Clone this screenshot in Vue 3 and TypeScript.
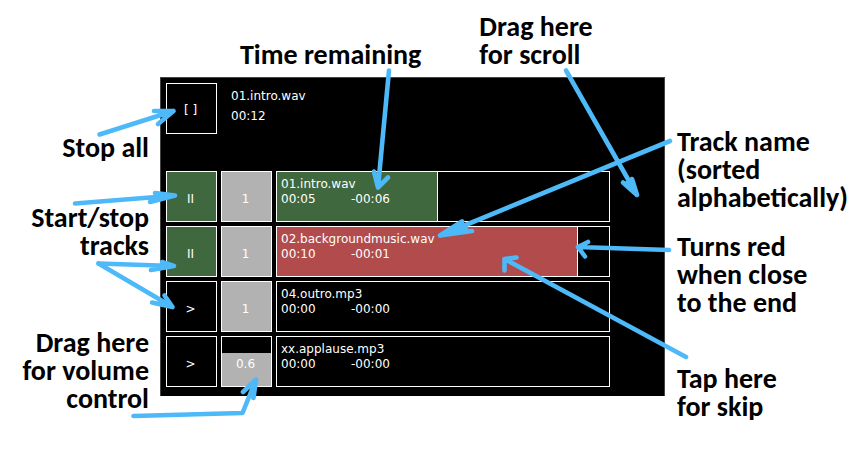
<script setup lang="ts">
import { ref } from 'vue'

interface Track {
  name: string
  elapsed: string
  remaining: string
  progress: number
  volume: number
  playing: boolean
  ending: boolean
}

const tracks = ref<Track[]>([
  { name: '01.intro.wav', elapsed: '00:05', remaining: '-00:06', progress: 48.5, volume: 1, playing: true, ending: false },
  { name: '02.backgroundmusic.wav', elapsed: '00:10', remaining: '-00:01', progress: 90.7, volume: 1, playing: true, ending: true },
  { name: '04.outro.mp3', elapsed: '00:00', remaining: '-00:00', progress: 0, volume: 1, playing: false, ending: false },
  { name: 'xx.applause.mp3', elapsed: '00:00', remaining: '-00:00', progress: 0, volume: 0.67, playing: false, ending: false },
])

const arrows: string[] = [
  'M99.5 134.5 L173.5 111 L154 111 M173.5 111 L158 124',
  'M75 203.5 L175 195.5 L155 193 M175 195.5 L150 202 M158 194 L168 196',
  'M98.5 263.5 L174 266 L162 262 M174 266 L151 270 M162 264 L172 266',
  'M98.5 263.5 L172.5 307 L164.5 295.5 M172.5 307 L152 302.5',
  'M133.5 416 L242.5 413 L256 379.5 L243 392 M256 379.5 L253.5 398',
  'M389 70.5 L378 187.5 L374 171.5 M378 187.5 L388 177.5',
  'M566 70.5 L637 195 L623 182.5 M637 195 L632 179 M627 183 L636 193',
  'M670 141 L440 235.5 L462 221.5 M440 235.5 L472 231 M446 234 L466 228',
  'M669 250 L578 247 L588 242 M578 247 L585 256.5',
  'M686 357 L504.5 259 L516.5 257.5 M504.5 259 L504.5 270.5',
]

const level = (v: number): string => (v >= 1 ? '1' : (Math.floor(v * 10) / 10).toString())

function stopAll(): void {
  tracks.value.forEach((t) => (t.playing = false))
}
</script>

<template>
  <main class="guide">
    <header class="top">
      <p class="note">Time remaining</p>
      <p class="note">Drag here<br />for scroll</p>
    </header>

    <aside class="side left">
      <p class="note stop-note">Stop all</p>
      <p class="note start-note">Start/stop<br />tracks</p>
      <p class="note volume-note">Drag here<br />for volume<br />control</p>
    </aside>

    <section class="player">
      <div class="now">
        <button class="cell" type="button" aria-label="Stop all" @click="stopAll">[ ]</button>
        <div class="now-text">
          <div>01.intro.wav</div>
          <div>00:12</div>
        </div>
      </div>
      <div v-for="t in tracks" :key="t.name" class="row">
        <button class="cell toggle" :class="{ playing: t.playing }" type="button" @click="t.playing = !t.playing">
          {{ t.playing ? 'II' : '>' }}
        </button>
        <label class="cell volume">
          <span class="fill" :style="{ height: t.volume * 100 + '%' }"></span>
          <span class="value">{{ level(t.volume) }}</span>
          <input v-model.number="t.volume" class="slider" type="range" min="0" max="1" step="0.01" />
        </label>
        <button class="track" type="button">
          <span v-if="t.progress" class="progress" :class="{ ending: t.ending }" :style="{ width: t.progress + '%' }"></span>
          <span class="info">
            <span class="name">{{ t.name }}</span>
            <span>{{ t.elapsed }}</span>
            <span>{{ t.remaining }}</span>
          </span>
        </button>
      </div>
    </section>

    <aside class="side right">
      <p class="note name-note">Track name<br />(sorted<br />alphabetically)</p>
      <p class="note red-note">Turns red<br />when close<br />to the end</p>
      <p class="note skip-note">Tap here<br />for skip</p>
    </aside>

    <svg class="arrows" viewBox="0 0 865 462" preserveAspectRatio="none" aria-hidden="true">
      <path v-for="d in arrows" :key="d" :d="d" />
    </svg>
  </main>
</template>

<style>
body {
  margin: 0;
  background: #fff;
}
</style>

<style scoped>
.guide {
  position: relative;
  display: grid;
  grid-template-columns: 160fr 505fr 200fr;
  grid-template-rows: 77px auto;
  align-items: start;
  padding-bottom: 41px;
  color: #000;
}
.note {
  margin: 0;
  font: 700 28px/28px Carlito, Lato, sans-serif;
  white-space: nowrap;
}
.top {
  grid-column: 2 / 4;
  align-self: end;
  display: flex;
  align-items: flex-end;
  gap: 58px;
  padding: 0 0 8px 80px;
}
.side {
  display: flow-root;
}
.left {
  grid-column: 1;
  text-align: right;
  padding-right: 11px;
}
.right {
  padding-left: 12px;
}
.stop-note {
  margin-top: 57px;
}
.start-note {
  margin-top: 42px;
}
.volume-note {
  margin-top: 69px;
}
.name-note {
  margin-top: 51px;
}
.red-note {
  margin-top: 21px;
}
.skip-note {
  margin-top: 48px;
}
.player {
  display: flex;
  flex-direction: column;
  gap: 4px;
  padding: 5px 54px 9px 5px;
  border: 1px solid #444;
  border-bottom: 0;
  background: #000;
  color: #fff;
  font: 12px/15px "DejaVu Sans", sans-serif;
}
.now {
  display: flex;
  gap: 14px;
  margin-bottom: 33px;
}
.now-text {
  padding-top: 3px;
  line-height: 20px;
}
.row {
  display: flex;
  gap: 4px;
}
.cell,
.track {
  box-sizing: border-box;
  height: 51px;
  margin: 0;
  padding: 0;
  border: 1px solid #fff;
  border-radius: 0;
  background: #000;
  color: inherit;
  font: inherit;
}
.cell {
  flex: none;
  width: 51px;
  padding: 3px 2px 0 0;
}
.toggle {
  padding-top: 5px;
}
.playing {
  background: #40683e;
}
.volume {
  display: grid;
  padding: 0;
  position: relative;
}
.fill,
.value {
  grid-area: 1 / 1;
}
.fill {
  align-self: end;
  background: #b2b2b2;
}
.value {
  place-self: center;
  padding: 5px 2px 0 0;
}
.slider {
  position: absolute;
  inset: 0;
  width: 100%;
  height: 100%;
  margin: 0;
  opacity: 0;
}
.track {
  flex: 1;
  display: grid;
  grid-template-rows: 100%;
  text-align: left;
}
.progress,
.info {
  grid-area: 1 / 1;
}
.progress {
  box-sizing: border-box;
  border-right: 1px solid #fff;
  background: #40683e;
}
.ending {
  background: #b24c4c;
}
.info {
  display: grid;
  grid-template-columns: 70px auto;
  align-content: start;
  justify-content: start;
  padding: 5px 4px;
}
.name {
  grid-column: 1 / 3;
}
.arrows {
  position: absolute;
  inset: 0;
  width: 100%;
  height: 100%;
  pointer-events: none;
  fill: none;
  stroke: #4eb9f8;
  stroke-width: 4.6;
  stroke-linecap: round;
  stroke-linejoin: round;
}
</style>
